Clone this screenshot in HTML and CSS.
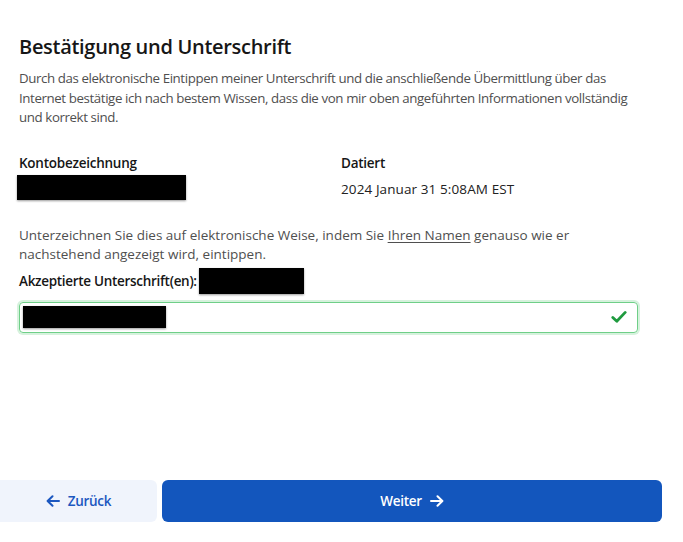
FILE: index.html
```html
<!DOCTYPE html>
<html lang="de">
<head>
<meta charset="utf-8">
<link rel="stylesheet" href="styles.css">
</head>
<body>
<main class="page">
  <section class="content">
    <h1 class="title">Bestätigung und Unterschrift</h1>
    <p class="intro">Durch das elektronische Eintippen meiner Unterschrift und die anschließende Übermittlung über das Internet bestätige ich nach bestem Wissen, dass die von mir oben angeführten Informationen vollständig und korrekt sind.</p>
    <div class="meta">
      <div class="meta-col">
        <div class="label">Kontobezeichnung</div>
        <div class="redact redact-account"></div>
      </div>
      <div class="meta-col">
        <div class="label">Datiert</div>
        <div class="value">2024 Januar 31 5:08AM EST</div>
      </div>
    </div>
    <p class="instr">Unterzeichnen Sie dies auf elektronische Weise, indem Sie <u>Ihren Namen</u> genauso wie er nachstehend angezeigt wird, eintippen.</p>
    <div class="accepted"><span class="label">Akzeptierte Unterschrift(en):</span><span class="redact redact-accepted"></span></div>
    <div class="sig-input">
      <span class="redact redact-sig"></span>
      <svg class="check" width="16" height="14" viewBox="0 0 16 14"><path d="M1.8 7.4 L5.8 11.2 L14.2 2.4" fill="none" stroke="#1f9a3f" stroke-width="2.8" stroke-linecap="round" stroke-linejoin="round"/></svg>
    </div>
  </section>
  <footer class="actions">
    <button class="btn btn-back"><svg width="14" height="12" viewBox="0 0 14 12"><path d="M13 6H2M6.5 1.2 1.6 6l4.9 4.8" fill="none" stroke="currentColor" stroke-width="2" stroke-linecap="round" stroke-linejoin="round"/></svg>Zurück</button>
    <button class="btn btn-next">Weiter<svg width="14" height="12" viewBox="0 0 14 12"><path d="M1 6h11M7.5 1.2 12.4 6l-4.9 4.8" fill="none" stroke="currentColor" stroke-width="2" stroke-linecap="round" stroke-linejoin="round"/></svg></button>
  </footer>
</main>
</body>
</html>
```
FILE: styles.css
```css
* { box-sizing: border-box; }
html, body { margin: 0; padding: 0; background: #fff; }
body {
  font-family: "Open Sans", "Liberation Sans", sans-serif;
  color: #1b1b1b;
  width: 683px;
  height: 542px;
}
.page {
  display: flex;
  flex-direction: column;
  height: 542px;
}
.content {
  padding: 33px 45px 0 19px;
  flex: 1;
}
.title {
  margin: 0;
  font-size: 20px;
  font-weight: 600;
  line-height: 28px;
  letter-spacing: -0.3px;
  color: #161616;
}
.intro {
  margin: 8px 0 0;
  font-size: 13.3px;
  line-height: 19.5px;
  letter-spacing: -0.4px;
  color: #4f4f4f;
}
.meta {
  display: grid;
  grid-template-columns: 322px 1fr;
  margin-top: 26px;
}
.label {
  font-size: 13.5px;
  font-weight: 600;
  line-height: 18px;
  letter-spacing: -0.25px;
  color: #161616;
}
.value {
  margin-top: 7px;
  font-size: 13.5px;
  line-height: 20px;
  letter-spacing: 0.1px;
  color: #222;
}
.redact {
  display: block;
  background: #000;
  box-shadow: 0 1px 2px rgba(0,0,0,0.4);
}
.redact-account {
  width: 169px;
  height: 25px;
  margin: 3px 0 0 -2px;
}
.instr {
  margin: 26px 0 0;
  font-size: 13.5px;
  line-height: 19.5px;
  letter-spacing: 0;
  color: #4f4f4f;
}
.instr u { text-underline-offset: 2px; }
.accepted {
  display: flex;
  align-items: center;
  margin-top: 3px;
}
.accepted .label { letter-spacing: -0.3px; }
.redact-accepted {
  display: inline-block;
  width: 105px;
  height: 26px;
  margin-left: 2px;
}
.sig-input {
  display: flex;
  align-items: center;
  justify-content: space-between;
  margin-top: 8px;
  height: 31px;
  width: 619px;
  border: 1.5px solid #6fcf88;
  border-radius: 4px;
  box-shadow: 0 0 0 2px #d6f2dd;
  padding: 0 10px 0 3px;
}
.redact-sig {
  width: 143px;
  height: 22px;
}
.check { display: block; }
.actions {
  display: flex;
  gap: 5px;
  padding: 0 21px 20px 0;
}
.btn {
  display: flex;
  align-items: center;
  justify-content: center;
  gap: 8px;
  height: 42px;
  border: none;
  border-radius: 6px;
  font-family: "Open Sans", "Liberation Sans", sans-serif;
  font-size: 13.5px;
  font-weight: 600;
  letter-spacing: -0.3px;
}
.btn-back {
  width: 157px;
  background: #f0f4fc;
  color: #1b57c0;
  border-radius: 0 6px 6px 0;
}
.btn-next {
  flex: 1;
  background: #1356bd;
  color: #fff;
}
```
